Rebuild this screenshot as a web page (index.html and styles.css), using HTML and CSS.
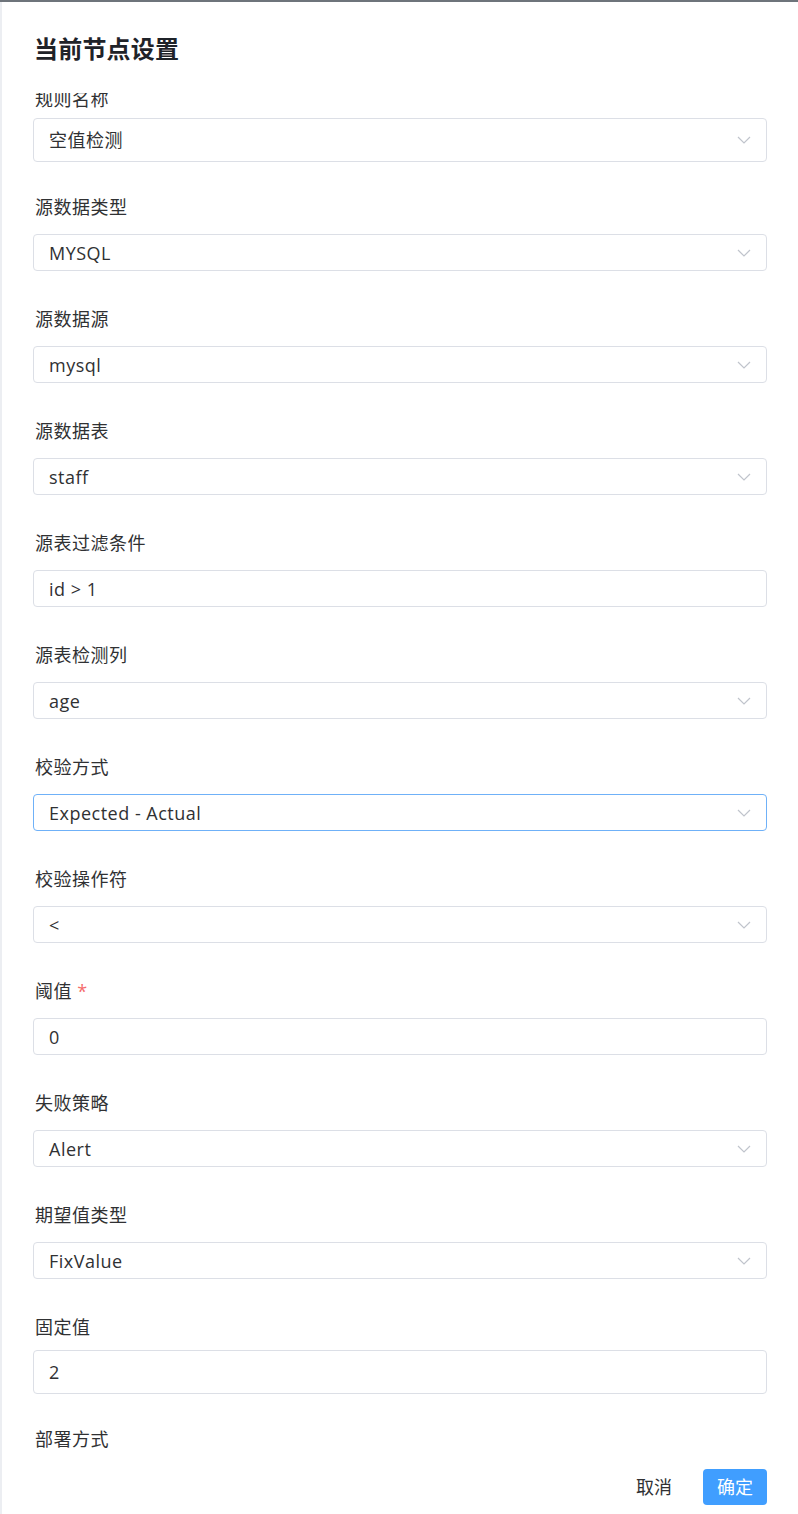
FILE: index.html
```html
<!DOCTYPE html>
<html lang="zh">
<head>
<meta charset="utf-8">
<title>当前节点设置</title>
<link rel="stylesheet" href="styles.css">
</head>
<body>
<div class="topbar"></div>
<div class="drawer">
  <div class="drawer-header"><h2 class="drawer-title">当前节点设置</h2></div>
  <div class="drawer-body">
    <form class="form">
      <div class="field field-first">
        <label class="label">规则名称</label>
        <div class="control select tall"><span class="value">空值检测</span><svg class="chev" viewBox="0 0 14 8"><path d="M1 1 L7 7 L13 1"/></svg></div>
      </div>
      <div class="field">
        <label class="label">源数据类型</label>
        <div class="control select"><span class="value">MYSQL</span><svg class="chev" viewBox="0 0 14 8"><path d="M1 1 L7 7 L13 1"/></svg></div>
      </div>
      <div class="field">
        <label class="label">源数据源</label>
        <div class="control select"><span class="value">mysql</span><svg class="chev" viewBox="0 0 14 8"><path d="M1 1 L7 7 L13 1"/></svg></div>
      </div>
      <div class="field">
        <label class="label">源数据表</label>
        <div class="control select"><span class="value">staff</span><svg class="chev" viewBox="0 0 14 8"><path d="M1 1 L7 7 L13 1"/></svg></div>
      </div>
      <div class="field">
        <label class="label">源表过滤条件</label>
        <div class="control"><span class="value">id &gt; 1</span></div>
      </div>
      <div class="field">
        <label class="label">源表检测列</label>
        <div class="control select"><span class="value">age</span><svg class="chev" viewBox="0 0 14 8"><path d="M1 1 L7 7 L13 1"/></svg></div>
      </div>
      <div class="field">
        <label class="label">校验方式</label>
        <div class="control select focused"><span class="value">Expected - Actual</span><svg class="chev" viewBox="0 0 14 8"><path d="M1 1 L7 7 L13 1"/></svg></div>
      </div>
      <div class="field">
        <label class="label">校验操作符</label>
        <div class="control select"><span class="value">&lt;</span><svg class="chev" viewBox="0 0 14 8"><path d="M1 1 L7 7 L13 1"/></svg></div>
      </div>
      <div class="field">
        <label class="label">阈值 <span class="req">*</span></label>
        <div class="control"><span class="value">0</span></div>
      </div>
      <div class="field">
        <label class="label">失败策略</label>
        <div class="control select"><span class="value">Alert</span><svg class="chev" viewBox="0 0 14 8"><path d="M1 1 L7 7 L13 1"/></svg></div>
      </div>
      <div class="field">
        <label class="label">期望值类型</label>
        <div class="control select"><span class="value">FixValue</span><svg class="chev" viewBox="0 0 14 8"><path d="M1 1 L7 7 L13 1"/></svg></div>
      </div>
      <div class="field">
        <label class="label">固定值</label>
        <div class="control tall"><span class="value">2</span></div>
      </div>
      <div class="field">
        <label class="label">部署方式</label>
        <div class="control select"><span class="value"></span></div>
      </div>
    </form>
  </div>
  <div class="drawer-footer">
    <button type="button" class="btn btn-text">取消</button>
    <button type="button" class="btn btn-primary">确定</button>
  </div>
</div>
</body>
</html>
```
FILE: styles.css
```css
* { box-sizing: border-box; }
html, body { margin: 0; padding: 0; }
body {
  background: #fff;
  font-family: "Open Sans", "Noto Sans CJK SC", sans-serif;
  color: #303133;
  height: 1514px;
  overflow: hidden;
  display: flex;
  flex-direction: column;
}
.topbar { height: 2px; background: #6e747b; flex: none; }
.drawer {
  flex: 1;
  display: flex;
  flex-direction: column;
  border-left: 2px solid #eceef2;
  min-height: 0;
}
.drawer-header { flex: none; height: 91px; padding: 31px 0 0 32px; }
.drawer-title {
  margin: 0;
  font-size: 24px;
  line-height: 32px;
  font-weight: 700;
  color: #1f2329;
  letter-spacing: 0.2px;
}
.drawer-body { flex: 1; overflow: hidden; min-height: 0; }
.form { margin: -6px 31px 0 31px; }
.field { margin-bottom: 36px; }
.label {
  display: block;
  font-size: 18px;
  line-height: 24px;
  margin-bottom: 15px;
  padding-left: 2px;
  letter-spacing: 0.5px;
  color: #303133;
}
.field-first .label { margin-bottom: 11px; }
.req { color: #f56c6c; }
.control {
  position: relative;
  height: 37px;
  border: 1px solid #dcdfe6;
  border-radius: 4px;
  display: flex;
  align-items: center;
  padding: 0 15px;
  font-size: 18px;
  color: #303133;
}
.control.tall { height: 44px; margin-top: -4px; margin-bottom: -3px; }
.control.focused { border-color: #6fb1f8; }
.value { flex: 1; line-height: 24px; letter-spacing: 0.5px; }
.chev {
  width: 14px;
  height: 8px;
  fill: none;
  stroke: #c0c4cc;
  stroke-width: 1.2;
}
.drawer-footer {
  flex: none;
  height: 59px;
  padding: 14px 31px 9px 0;
  display: flex;
  justify-content: flex-end;
  align-items: center;
  gap: 17px;
}
.btn {
  font-family: inherit;
  font-size: 18px;
  height: 36px;
  padding: 0 14px;
  border: none;
  border-radius: 4px;
  background: transparent;
  color: #303133;
  cursor: pointer;
  line-height: 36px;
}
.btn-primary { background: #409eff; color: #fff; }
```
